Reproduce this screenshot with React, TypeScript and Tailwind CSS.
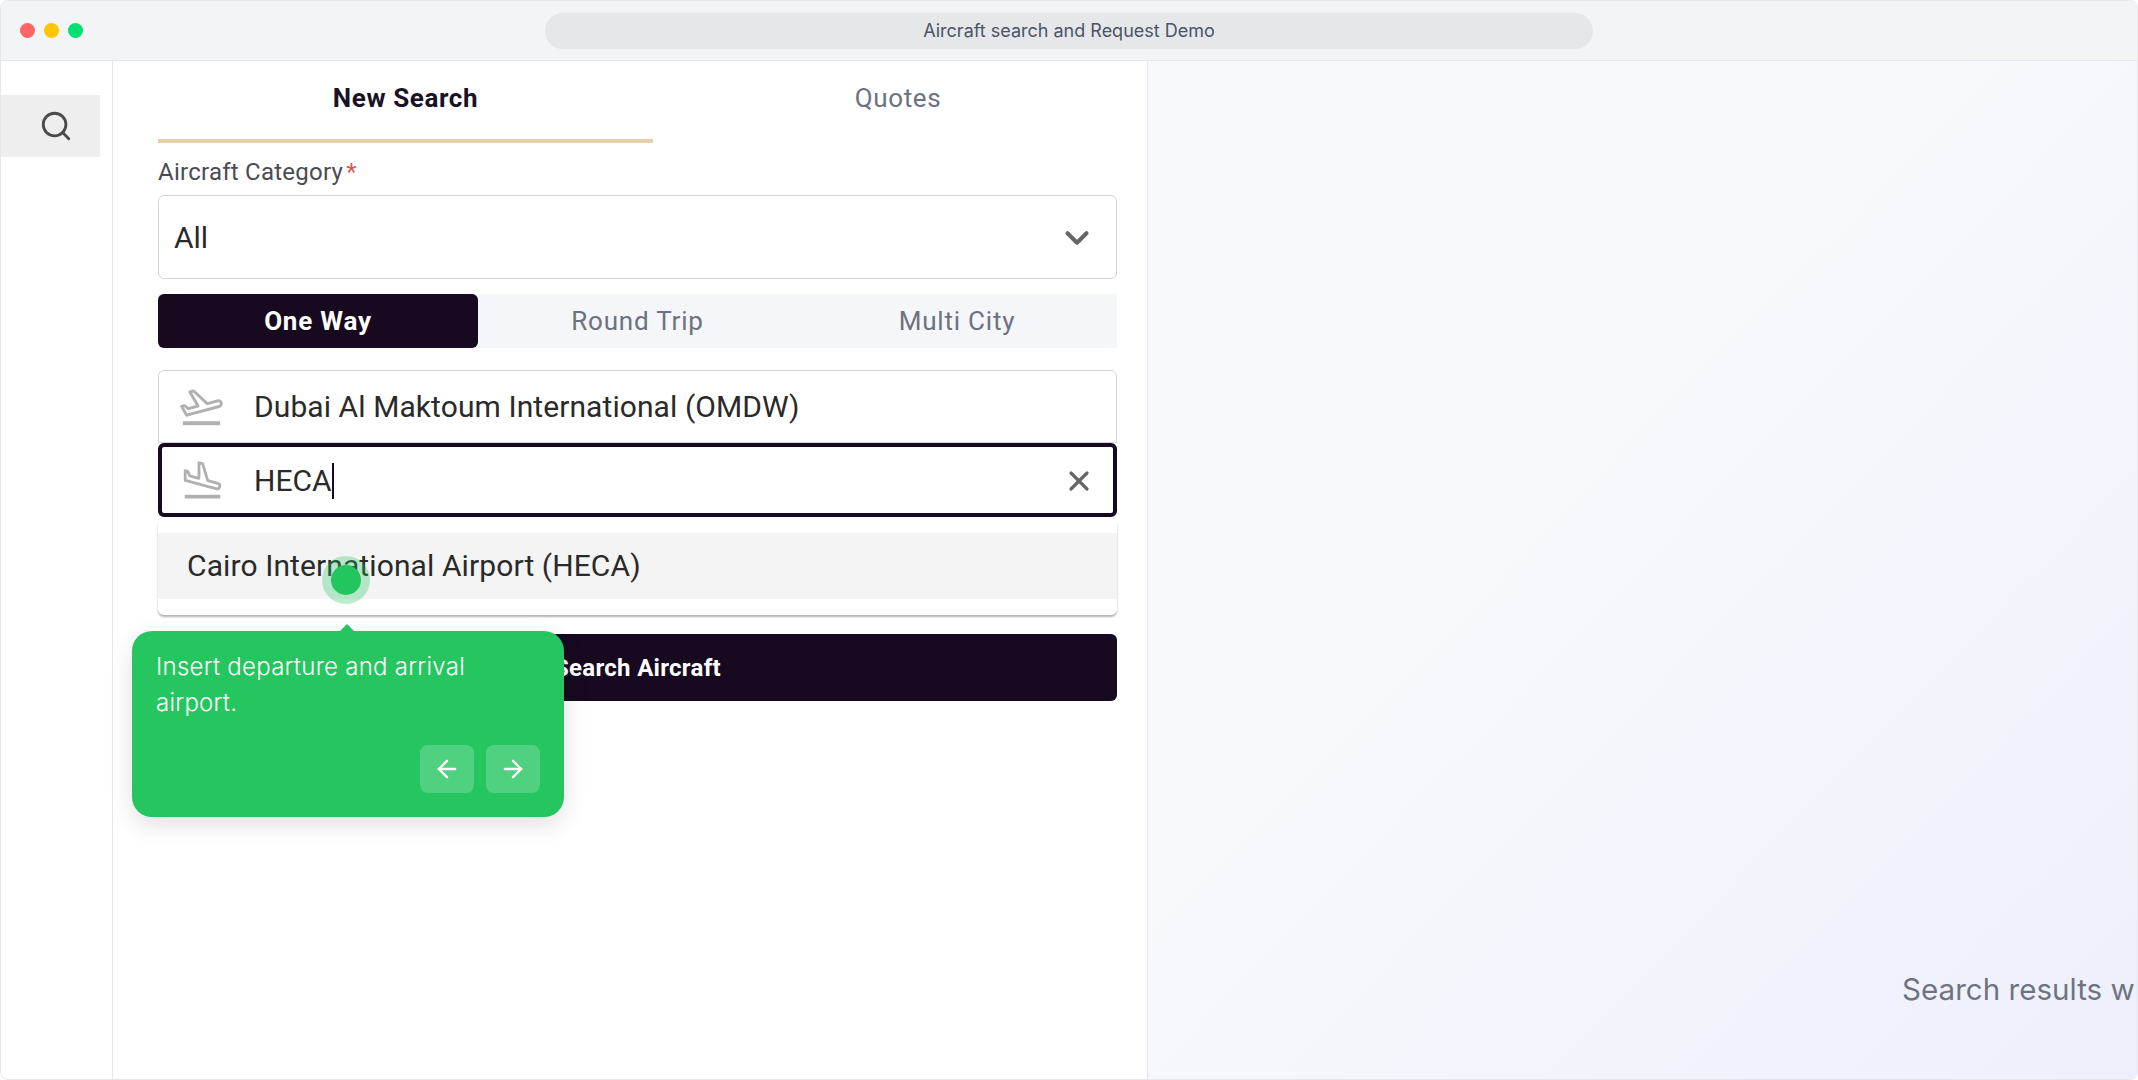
import { ArrowLeft, ArrowRight, ChevronDown, Search, X } from "lucide-react";

function Takeoff() {
  return (
    <svg viewBox="0 0 24 24" className="mt-[2px] h-[47px] w-[47px] shrink-0" fill="none">
      <path d="M2.5 20h19" stroke="#b0b0b0" strokeWidth="2" />
      <path
        d="M22.07 9.64c-.21-.8-1.04-1.28-1.84-1.06L14.92 10l-6.9-6.43-1.93.51 4.14 7.17-4.97 1.33-1.97-1.54-1.45.39 2.59 4.49s7.12-1.9 16.57-4.43c.81-.23 1.28-1.05 1.07-1.85z"
        stroke="#b0b0b0"
        strokeWidth="1.5"
        strokeLinejoin="round"
      />
    </svg>
  );
}

function Landing() {
  return (
    <svg viewBox="0 0 24 24" className="mt-[2px] h-[45px] w-[45px] shrink-0" fill="none">
      <path d="M2.5 20h19" stroke="#b0b0b0" strokeWidth="2" />
      <path
        d="M9.68 13.27l4.35 1.16 5.31 1.42c.8.21 1.62-.26 1.84-1.06.21-.8-.26-1.62-1.06-1.84l-5.31-1.42-2.76-9.02L10.12 2v8.28L5.15 8.95l-.93-2.32-1.45-.39v5.17l1.6.43 5.31 1.43z"
        stroke="#b0b0b0"
        strokeWidth="1.5"
        strokeLinejoin="round"
      />
    </svg>
  );
}

export default function App() {
  return (
    <div className="relative flex h-[1080px] w-full flex-col overflow-hidden rounded-t-lg rounded-b-lg border border-gray-200 bg-white font-['Roboto',sans-serif]">
      <header className="relative flex h-[60px] shrink-0 items-center border-b border-gray-200 bg-gray-100 pl-[19px]">
        <div className="flex gap-[9px]">
          <span className="h-[15px] w-[15px] rounded-full bg-red-400" />
          <span className="h-[15px] w-[15px] rounded-full bg-yellow-400" />
          <span className="h-[15px] w-[15px] rounded-full bg-green-400" />
        </div>
        <div className="ml-[462px] flex h-[36px] w-[1048px] items-center justify-center rounded-full bg-gray-200 font-['Inter',sans-serif] text-[18px] text-gray-600">
          Aircraft search and Request Demo
        </div>
      </header>

      <div className="flex min-h-0 flex-1">
        <aside className="w-[112px] shrink-0 border-r border-gray-200 pt-[34px]">
          <div className="flex h-[62px] w-[99px] items-center justify-center bg-[#eeeeee] pl-[10px] text-[#4a4a4a]">
            <Search className="h-[34px] w-[34px]" strokeWidth={2} />
          </div>
        </aside>

        <main className="relative w-[1034px] shrink-0 pl-[45px] pr-[30px]">
          <div className="-mr-[26px] flex h-[82px] text-[26px] tracking-[0.6px]">
            <div className="flex w-[495px] items-center justify-center border-b-4 border-[#e6ceac] pb-[4px] font-bold text-[#1a1225]">
              New Search
            </div>
            <div className="flex w-[490px] items-center justify-center pb-[8px] text-[#6b7280]">Quotes</div>
          </div>

          <label className="mt-[14px] flex h-[30px] items-center text-[24px] tracking-[0.25px] text-[#4b4b55]">
            Aircraft Category<span className="ml-[3px] text-[#e2574c]">*</span>
          </label>
          <div className="mt-[8px] flex h-[84px] items-center justify-between rounded-md border border-gray-300 pl-[15px] pr-[20px] text-[30px] text-[#2a2a2a]">
            <span>All</span>
            <ChevronDown className="mt-[1px] h-[38px] w-[38px] text-[#666666]" strokeWidth={2.6} />
          </div>

          <div className="mt-[15px] flex h-[54px] items-center bg-[#f5f6fa] text-[26px] tracking-[0.8px] text-[#6b7280]">
            <div className="flex h-full w-[320px] items-center justify-center rounded-md bg-[#170a20] font-bold text-white">
              One Way
            </div>
            <div className="flex h-full w-[319px] items-center justify-center">Round Trip</div>
            <div className="flex h-full w-[320px] items-center justify-center">Multi City</div>
          </div>

          <div className="mt-[22px] flex h-[73px] items-center rounded-t-md border border-gray-300 pl-[19px] text-[30px] tracking-[0.08px] text-[#2a2a2a]">
            <Takeoff />
            <span className="ml-[29px]">Dubai Al Maktoum International (OMDW)</span>
          </div>
          <div className="flex h-[74px] items-center rounded-md border-4 border-[#170a20] pl-[18px] pr-[18px] text-[30px] text-[#2a2a2a]">
            <Landing />
            <span className="ml-[29px] mt-[2px] border-r-2 border-[#170a20] leading-[36px]">HECA</span>
            <X className="ml-auto mt-[1px] h-[32px] w-[32px] text-[#666666]" strokeWidth={2.4} />
          </div>
          <div className="mt-px h-[97px] rounded-md bg-white pt-[15px] shadow-[0_2px_2px_rgba(0,0,0,0.3)]">
            <div className="flex h-[66px] items-center bg-[#f4f4f4] pb-[2px] pl-[29px] text-[30px] tracking-[0.1px] text-[#2a2a2a]">
              Cairo International Airport (HECA)
            </div>
          </div>

          <div className="mt-[19px] flex h-[67px] items-center justify-center rounded-md bg-[#170a20] text-[24px] font-bold tracking-[0.3px] text-white">
            Search Aircraft
          </div>

          <div className="absolute left-[209px] top-[495px] flex h-[48px] w-[48px] items-center justify-center rounded-full bg-[#22c55e]/30">
            <div className="h-[30px] w-[30px] rounded-full bg-[#22c55e]" />
          </div>

          <div className="absolute left-[19px] top-[570px] h-[186px] w-[432px] rounded-[20px] bg-[#25c660] font-['Inter',sans-serif] shadow-[0_8px_24px_rgba(0,0,0,0.12)]">
            <div className="absolute left-[207px] top-[-7px] h-0 w-0 border-x-[8px] border-b-[8px] border-x-transparent border-b-[#25c660]" />
            <p className="pl-[24px] pr-[60px] pt-[18px] text-[24px] font-light leading-[36px] tracking-[0.25px] text-white">
              Insert departure and arrival airport.
            </p>
            <div className="absolute bottom-[24px] right-[24px] flex gap-[12px]">
              <div className="flex h-[48px] w-[54px] items-center justify-center rounded-lg bg-white/20 text-white">
                <ArrowLeft className="h-[28px] w-[28px]" strokeWidth={2} />
              </div>
              <div className="flex h-[48px] w-[54px] items-center justify-center rounded-lg bg-white/20 text-white">
                <ArrowRight className="h-[28px] w-[28px]" strokeWidth={2} />
              </div>
            </div>
          </div>
        </main>

        <section className="flex min-w-0 flex-1 items-end overflow-hidden border-l border-gray-200 bg-gradient-to-br from-[#f8f9fd] from-40% to-[#edf0fb] pb-[71px] pl-[754px]">
          <span className="whitespace-nowrap font-['Inter',sans-serif] text-[29.6px] leading-[38px] text-[#6f7380]">
            Search results w
          </span>
        </section>
      </div>
    </div>
  );
}
